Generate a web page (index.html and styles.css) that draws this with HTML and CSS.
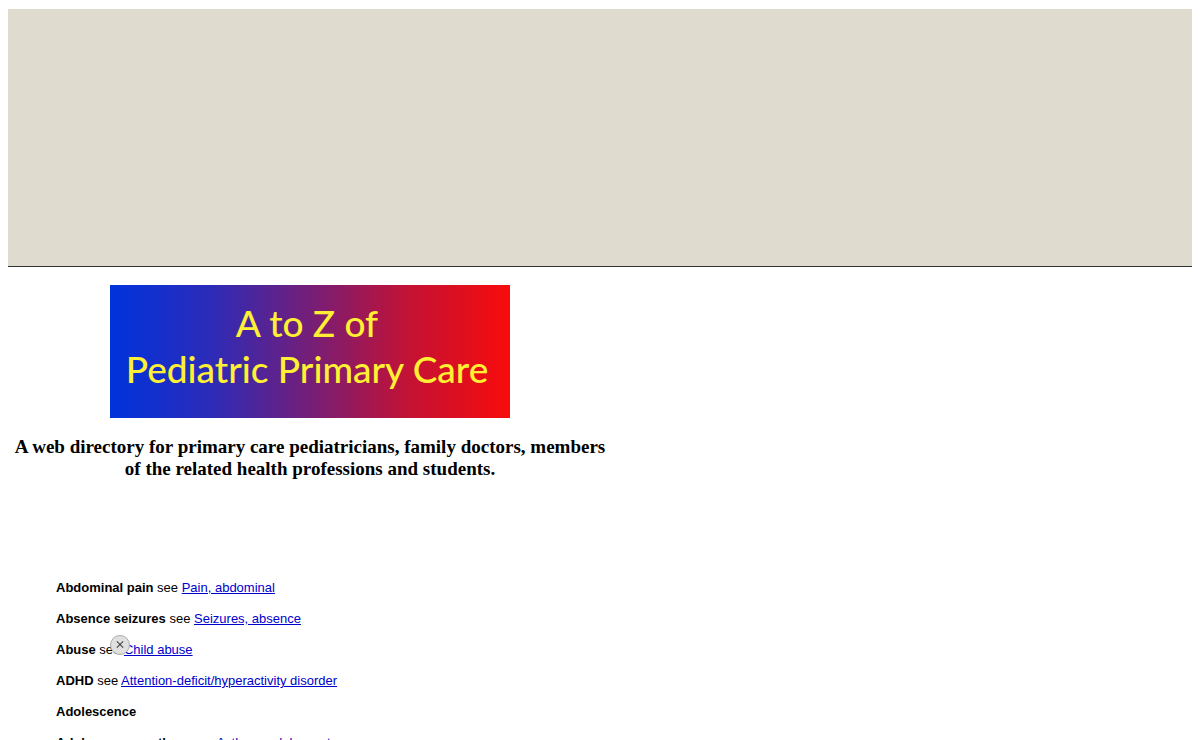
FILE: index.html
```html
<!DOCTYPE html>
<html lang="en">
<head>
    <meta charset="UTF-8">
    <meta name="viewport" content="width=device-width, initial-scale=1.0">
    <title>A to Z of Pediatric Primary Care</title>
    <link rel="stylesheet" href="styles.css">
</head>
<body>
    <div class="banner"></div>

    <header class="intro">
        <h1 class="logo">A to Z of<br>Pediatric Primary Care</h1>
        <h2 class="tagline">A web directory for primary care pediatricians, family doctors, members of the related health professions and students.</h2>
    </header>

    <main class="directory">
        <p><b>Abdominal pain</b> see <a href="#pain-abdominal">Pain, abdominal</a></p>
        <p><b>Absence seizures</b> see <a href="#seizures-absence">Seizures, absence</a></p>
        <p><b>Abuse</b> see <a href="#child-abuse">Child abuse</a></p>
        <p><b>ADHD</b> see <a href="#adhd">Attention-deficit/hyperactivity disorder</a></p>
        <p><b>Adolescence</b></p>
        <p><b>Adolescence, asthma</b> see <a href="#asthma-adolescent">Asthma, adolescent</a></p>
    </main>

    <button class="close" type="button" aria-label="Close">
        <svg viewBox="0 0 20 20" width="20" height="20" aria-hidden="true">
            <path d="M6.5 6l7 7M13.5 6l-7 7" fill="none" stroke="#444" stroke-width="1.2"/>
        </svg>
    </button>
</body>
</html>
```

FILE: styles.css
```css
body {
    margin: 9px 8px 0;
    background-color: #fff;
    color: #000;
    font-family: "Liberation Sans", Arial, sans-serif;
    font-size: 13px;
    line-height: 15px;
}

.banner {
    height: 257px;
    background-color: #dfdbcf;
    border-bottom: 1px solid #333;
}

.intro {
    max-width: 604px;
    margin-top: 18px;
    text-align: center;
}

.logo {
    box-sizing: border-box;
    max-width: 400px;
    min-height: 133px;
    margin: 0 auto;
    padding: 15px 6px 15px 0;
    background: linear-gradient(to right, #0033dd, #2c2bb8 25%, #751e78 50%, #c41234 75%, #f80b0b);
    color: #fff033;
    font-family: Lato, sans-serif;
    font-size: 37px;
    font-weight: 500;
    line-height: 46px;
}

.tagline {
    margin: 18px 0 0;
    font-family: "Liberation Serif", "Times New Roman", serif;
    font-size: 19px;
    line-height: 22px;
}

.directory {
    margin: 100px 48px 0;
}

.directory p {
    margin: 0 0 16px;
}

a {
    color: #0000cc;
}

.close {
    position: fixed;
    left: 110px;
    bottom: 85px;
    width: 20px;
    height: 20px;
    padding: 0;
    border: 1px solid #aaa;
    border-radius: 50%;
    background-color: #e0e0e0;
    display: flex;
    align-items: center;
    justify-content: center;
    cursor: pointer;
}
```
